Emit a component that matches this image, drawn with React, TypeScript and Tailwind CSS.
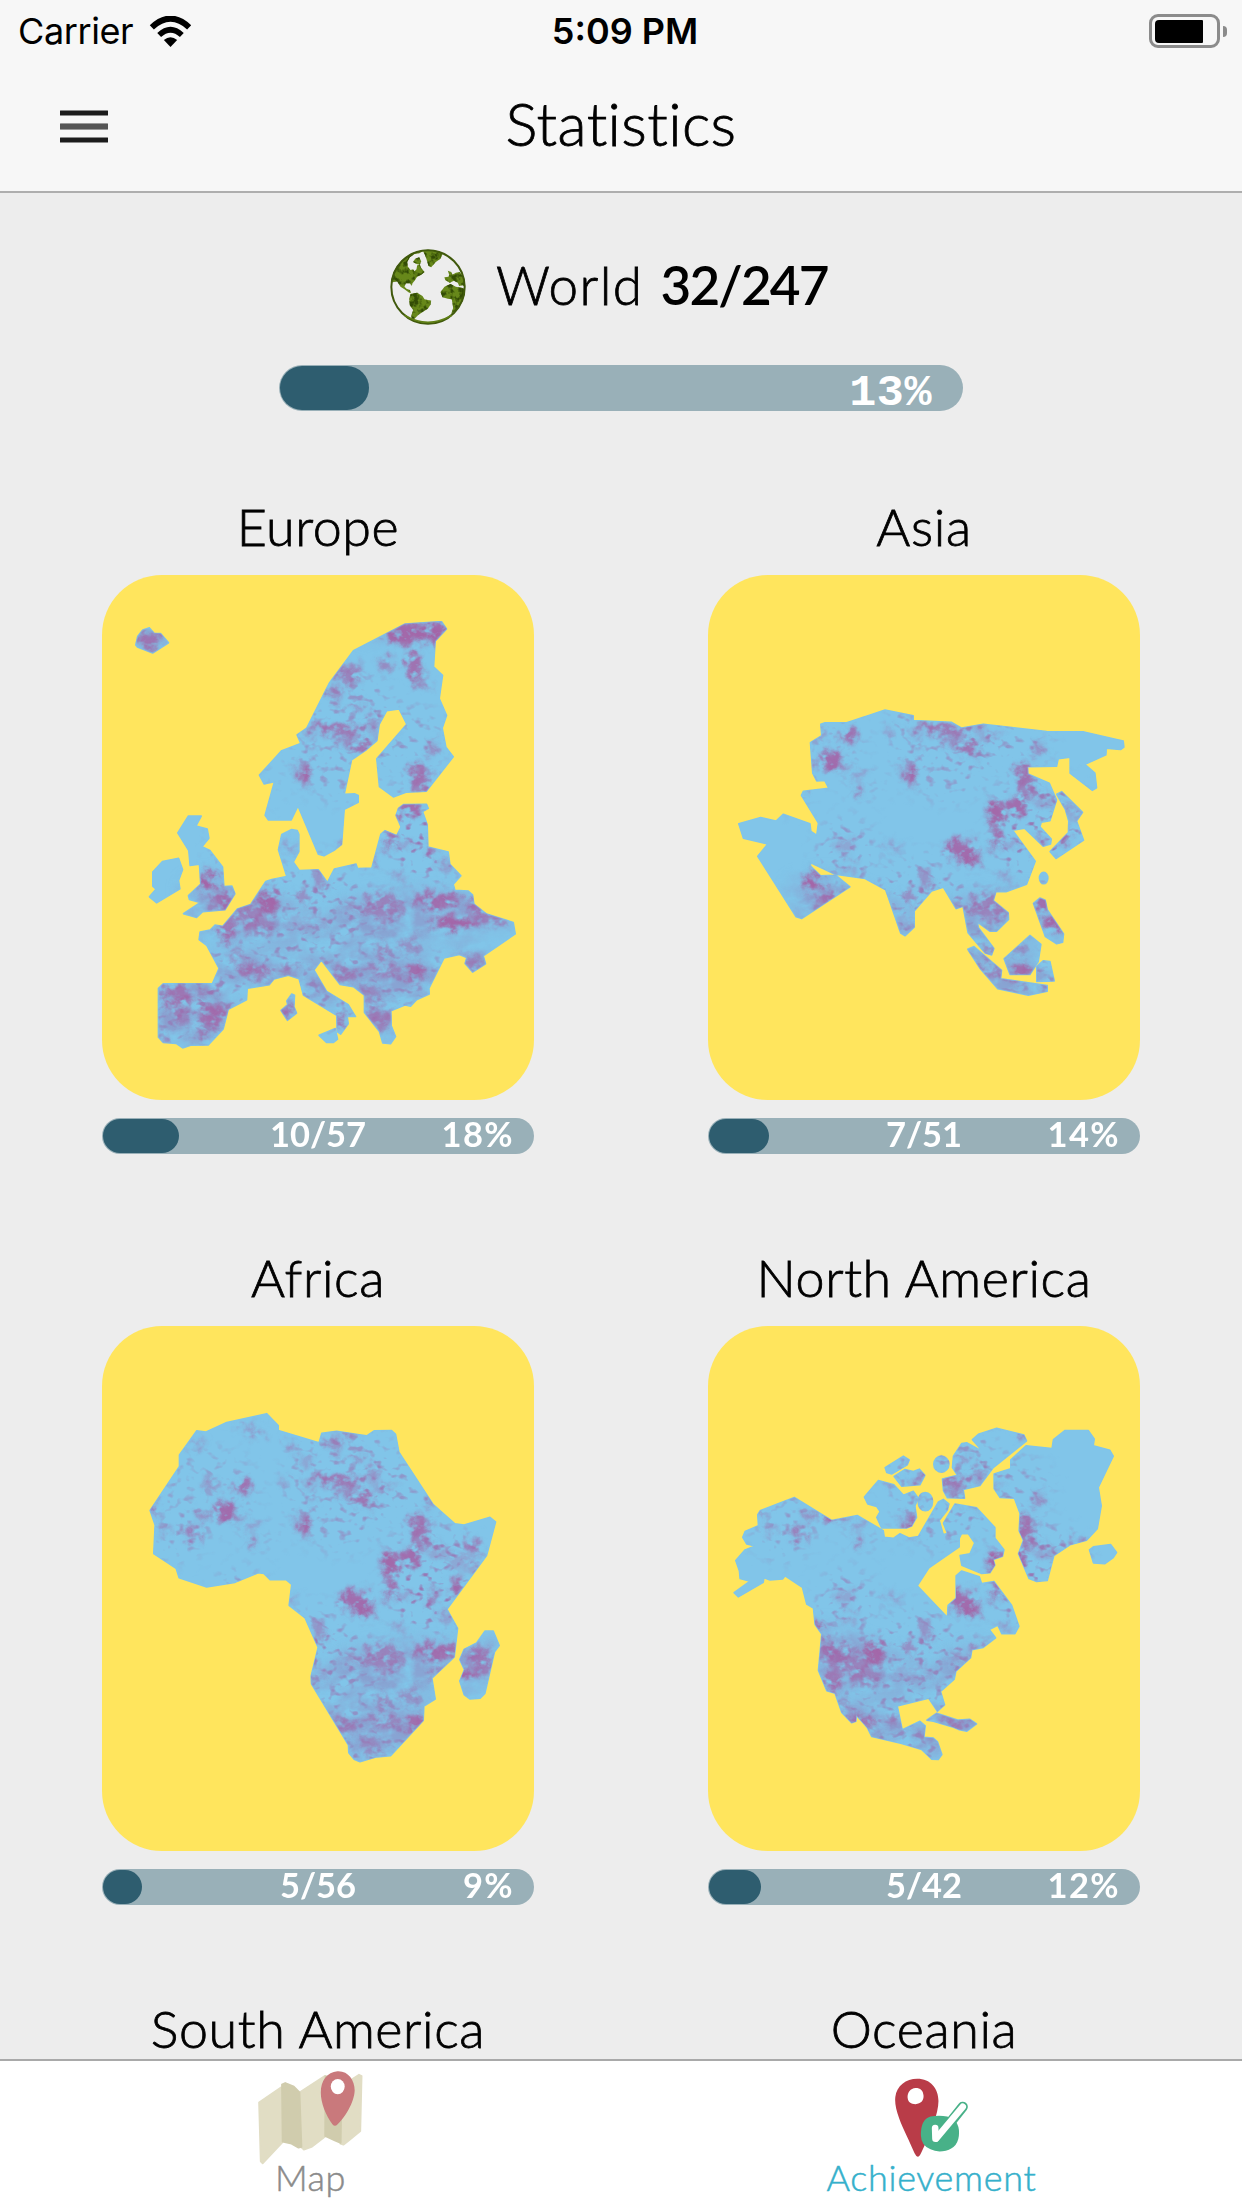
import { useId } from "react";

/* ---------- texture shared by every continent ---------- */

type Blob = [x: number, y: number, rx: number, ry: number, opacity: number];

const BLOBS: Blob[] = [
  [930, 165, 90, 28, 0.95], [1012, 160, 30, 34, 0.95], [740, 270, 50, 22, 0.7], [860, 245, 26, 20, 0.6],
  [940, 250, 24, 40, 0.85], [965, 292, 30, 14, 0.6], [700, 320, 20, 20, 0.4], [770, 351, 28, 7, 0.7],
  [700, 415, 95, 10, 1], [745, 446, 42, 14, 0.6], [790, 465, 34, 18, 0.85], [820, 398, 20, 20, 0.5],
  [850, 433, 40, 6, 0.6], [635, 456, 12, 12, 0.5], [615, 530, 17, 34, 0.95], [595, 515, 20, 8, 0.5],
  [570, 330, 15, 14, 0.5], [1000, 465, 20, 15, 0.6], [960, 528, 34, 24, 0.85], [956, 560, 22, 16, 0.8],
  [932, 612, 28, 26, 0.9], [962, 590, 24, 12, 0.7], [870, 635, 30, 32, 0.95], [875, 700, 18, 32, 0.85],
  [765, 730, 50, 30, 0.9], [800, 757, 32, 14, 1], [1000, 720, 22, 22, 0.6], [1068, 690, 24, 24, 0.75],
  [1120, 585, 26, 20, 0.75], [1090, 630, 50, 20, 0.3], [1030, 772, 30, 10, 0.5], [1020, 600, 40, 14, 0.35],
  [915, 715, 30, 10, 0.4], [900, 800, 20, 10, 0.4], [430, 431, 28, 15, 0.9], [374, 492, 26, 26, 0.9],
  [395, 510, 30, 12, 0.6], [330, 430, 30, 14, 0.45], [278, 558, 26, 14, 0.8], [305, 512, 16, 14, 0.6],
  [166, 492, 15, 20, 0.8], [455, 570, 10, 20, 0.7], [290, 322, 20, 12, 0.45], [465, 290, 34, 12, 0.6],
  [422, 262, 10, 8, 0.7], [620, 360, 22, 8, 0.5], [700, 320, 30, 12, 0.35], [465, 530, 20, 8, 0.4],
  [550, 420, 22, 10, 0.4], [195, 545, 25, 8, 0.4], [150, 180, 40, 26, 0.75], [322, 812, 30, 22, 1],
  [370, 855, 34, 18, 0.8], [508, 865, 30, 30, 0.95], [435, 895, 60, 32, 0.65], [378, 940, 32, 24, 0.85],
  [475, 930, 50, 20, 0.6], [410, 1010, 26, 12, 0.6], [456, 1045, 46, 18, 0.8], [415, 720, 26, 22, 0.3],
  [430, 770, 26, 14, 0.35], [660, 812, 24, 24, 0.5], [610, 855, 14, 22, 0.6], [560, 722, 22, 10, 0.5],
  [380, 870, 60, 26, 0.5], [1010, 860, 72, 20, 0.9], [1070, 920, 75, 18, 1], [1180, 912, 44, 12, 0.8],
  [850, 880, 62, 36, 0.65], [850, 1000, 20, 24, 0.6], [930, 980, 34, 20, 0.5], [850, 1050, 64, 14, 0.65],
  [945, 1050, 30, 28, 0.85], [730, 1060, 44, 20, 0.7], [810, 1110, 24, 30, 0.5], [840, 1170, 44, 26, 0.65],
  [1120, 1028, 30, 20, 0.6], [1140, 875, 34, 28, 0.8], [1100, 1010, 30, 10, 0.4], [230, 1120, 46, 38, 0.75],
  [340, 1165, 42, 28, 0.85], [250, 1170, 30, 20, 0.5], [312, 1212, 22, 20, 0.7], [190, 1226, 20, 10, 0.6],
  [308, 1105, 22, 14, 0.6], [565, 1158, 26, 20, 0.95], [728, 1180, 20, 20, 0.75], [575, 1040, 30, 16, 0.4],
  [745, 880, 24, 18, 0.35], [620, 920, 60, 24, 0.25],
];

const HAZE: Blob[] = [
  [430, 900, 160, 60, 0.55], [950, 900, 240, 60, 0.5], [1180, 885, 80, 40, 0.6], [600, 1080, 130, 60, 0.55],
  [850, 1080, 200, 90, 0.5], [700, 950, 200, 60, 0.3], [270, 1150, 130, 90, 0.6], [350, 840, 110, 40, 0.5],
  [900, 150, 140, 30, 0.45], [150, 185, 60, 40, 0.6], [1120, 1020, 60, 40, 0.6], [565, 1150, 50, 40, 0.6],
  [450, 1040, 130, 40, 0.55], [840, 1190, 60, 50, 0.4],
];

const FLECKS: Blob[] = [
  [640, 890, 260, 80, 0.7], [900, 440, 140, 90, 0.5], [720, 420, 170, 180, 0.55], [1000, 660, 150, 130, 0.8],
  [420, 740, 90, 90, 0.6], [320, 440, 160, 110, 0.4], [230, 560, 90, 60, 0.5], [620, 1080, 500, 120, 0.6],
  [980, 730, 120, 90, 0.6], [640, 800, 110, 60, 0.5], [260, 1150, 130, 110, 0.6], [480, 560, 80, 40, 0.3],
];

function Ellipses({ items }: { items: Blob[] }) {
  return (
    <>
      {items.map(([cx, cy, rx, ry, o], i) => (
        <ellipse key={i} cx={cx} cy={cy} rx={rx} ry={ry} opacity={o} />
      ))}
    </>
  );
}

interface Shape {
  viewBox: string;
  dx: number;
  dy: number;
  polygons: string[];
  ellipses?: [number, number, number, number][];
}

function Continent({ shape }: { shape: Shape }) {
  const id = useId().replace(/[^a-zA-Z0-9]/g, "");
  return (
    <svg viewBox={shape.viewBox} preserveAspectRatio="none" className="block h-full w-full">
      <defs>
        <filter id={`patch${id}`} filterUnits="userSpaceOnUse" x="0" y="0" width="1310" height="1400" colorInterpolationFilters="sRGB">
          <feGaussianBlur in="SourceGraphic" stdDeviation="8" result="soft" />
          <feTurbulence type="fractalNoise" baseFrequency="0.03" numOctaves="3" seed="7" result="warp" />
          <feDisplacementMap in="soft" in2="warp" scale="50" xChannelSelector="R" yChannelSelector="G" result="bent" />
          <feTurbulence type="fractalNoise" baseFrequency="0.03 0.045" numOctaves="3" seed="21" />
          <feColorMatrix values="0 0 0 0 0  0 0 0 0 0  0 0 0 0 0  4 0 0 0 -1.05" result="grain" />
          <feComposite in="bent" in2="grain" operator="in" />
          <feGaussianBlur stdDeviation="2" />
        </filter>
        <filter id={`haze${id}`} filterUnits="userSpaceOnUse" x="0" y="0" width="1310" height="1400" colorInterpolationFilters="sRGB">
          <feGaussianBlur in="SourceGraphic" stdDeviation="22" result="soft" />
          <feTurbulence type="fractalNoise" baseFrequency="0.016 0.026" numOctaves="4" seed="4" />
          <feColorMatrix values="0 0 0 0 0  0 0 0 0 0  0 0 0 0 0  2.6 0 0 0 -0.8" result="grain" />
          <feComposite in="soft" in2="grain" operator="in" />
        </filter>
        <filter id={`speck${id}`} filterUnits="userSpaceOnUse" x="0" y="0" width="1310" height="1400" colorInterpolationFilters="sRGB">
          <feGaussianBlur in="SourceGraphic" stdDeviation="24" result="soft" />
          <feTurbulence type="fractalNoise" baseFrequency="0.035 0.055" numOctaves="2" seed="12" />
          <feColorMatrix values="0 0 0 0 0  0 0 0 0 0  0 0 0 0 0  0 5 0 0 -2.8" result="grain" />
          <feComposite in="soft" in2="grain" operator="in" />
        </filter>
        <clipPath id={`land${id}`}>
          {shape.polygons.map((p, i) => (
            <polygon key={i} points={p} />
          ))}
          {shape.ellipses?.map(([cx, cy, rx, ry], i) => (
            <ellipse key={i} cx={cx} cy={cy} rx={rx} ry={ry} />
          ))}
        </clipPath>
      </defs>
      <g fill="#81c5e9" stroke="#81c5e9" strokeWidth="4" strokeLinejoin="round">
        {shape.polygons.map((p, i) => (
          <polygon key={i} points={p} />
        ))}
      </g>
      <g clipPath={`url(#land${id})`}>
        <rect width="1340" height="1400" fill="#81c5e9" />
        <g transform={`translate(${shape.dx} ${shape.dy})`}>
          <g fill="#8f84bd" filter={`url(#haze${id})`}>
            <Ellipses items={HAZE} />
          </g>
          <g fill="#9a72b0" filter={`url(#speck${id})`}>
            <Ellipses items={FLECKS} />
          </g>
          <g fill="#a464a7" filter={`url(#patch${id})`}>
            <Ellipses items={BLOBS} />
          </g>
        </g>
      </g>
    </svg>
  );
}

const EUROPE: Shape = {
  viewBox: "6 12 1296 1372",
  dx: 0,
  dy: 0,
  polygons: [
    "107,195 113,172 128,156 148,150 162,164 182,165 206,189 158,216 112,200",
    "1015,134 1025,134 1040,153 1006,184 1001,252 1028,274 1018,335 1040,379 1027,412 1038,462 1060,487 979,577 918,580 880,592 838,565 830,492 920,402 897,362 860,367 838,402 831,445 800,468 755,495 733,585 765,584 775,588 775,606 733,624 725,716 705,730 672,746 655,742 594,616 574,652 505,652 495,640 523,552 492,558 478,535 545,471 602,452 591,430 620,412 688,294 760,210 915,140",
    "265,642 304,642 288,668 322,676 327,700 306,722 330,732 368,775 372,826 396,825 405,845 375,887 308,892 290,907 250,897 300,868 268,860 265,850 302,820 298,768 270,771 266,732 233,686",
    "187,761 236,752 248,782 236,810 240,832 170,869 148,853 168,833 158,825 158,788",
    "560,800 535,730 545,690 575,677 592,680 597,690 597,735 580,762 598,784 655,782 682,815 703,780 768,767 773,779 815,778 842,690 855,680 890,693 903,670 888,640 895,622 910,612 980,611 985,622 968,630 982,665 984,723 1045,736 1050,768 1083,798 1060,820 1065,836 1105,838 1118,848 1122,872 1160,898 1240,920 1246,950 1150,1007 1157,1028 1118,1050 1095,1027 1100,1012 1078,1004 1032,1013 987,1092 988,1107 950,1122 932,1139 915,1136 873,1151 874,1190 887,1218 872,1237 848,1235 838,1205 793,1155 793,1110 760,1088 720,1082 664,1019 642,1044 680,1100 745,1135 767,1166 742,1165 745,1185 722,1212 711,1205 710,1163 610,1110 597,1067 565,1058 522,1068 508,1083 442,1092 440,1122 385,1147 370,1198 325,1240 272,1241 248,1248 228,1236 190,1234 175,1220 175,1092 190,1080 337,1080 357,1040 320,980 297,965 300,945 330,940 345,927 368,930 412,885 452,873 497,813 515,808",
    "560,1125 575,1107 584,1110 582,1140 590,1157 562,1176 543,1150 563,1135",
    "657,1215 706,1197 713,1225 700,1234 680,1234",
  ],
};

const ASIA: Shape = {
  viewBox: "24 12 1296 1372",
  dx: 18,
  dy: 0,
  polygons: [
    "362,402 375,398 440,398 555,365 640,380 640,392 755,397 785,412 850,402 1040,421 1152,422 1270,446 1272,462 1262,468 1219,465 1218,482 1155,507 1185,530 1190,568 1177,575 1110,530 1110,488 1075,492 1070,512 983,513 984,532 1048,556 1070,600 1050,654 1024,658 1020,670 1054,702 1052,715 1030,721 974,674 938,679 1006,760 980,820 918,840 888,840 880,863 925,895 926,912 890,943 870,943 833,920 835,933 882,988 875,1005 855,1000 804,947 789,878 768,884 730,828 695,838 643,890 643,932 615,955 602,948 557,835 495,805 405,794 332,764 332,773 362,798 408,797 450,827 305,910 288,905 173,747 203,715 130,700 116,662 182,646 228,655 250,637 330,662 333,682 350,692 355,660 304,588 310,577 386,569 374,549 350,550 338,530 331,450 365,432",
    "1070,585 1085,578 1148,632 1130,655 1151,705 1068,753 1050,735 1105,685 1106,655 1096,625",
    "1000,870 1020,856 1036,862 1042,887 1091,950 1088,972 1070,976 1036,957",
    "912,1015 990,954 1023,977 1015,1022 990,1056 930,1056",
    "1010,1035 1030,1020 1050,1022 1063,1073 1010,1074",
    "803,990 822,983 905,1045 902,1067 1042,1085 1042,1100 985,1110 893,1093 840,1040",
  ],
  ellipses: [[1031, 804, 15, 17]],
};

const AFRICA: Shape = {
  viewBox: "6 15 1296 1372",
  dx: 0,
  dy: 3,
  polygons: [
    "150,497 238,382 238,352 290,289 318,292 380,267 500,244 535,275 535,288 657,320 665,295 710,290 800,302 822,289 875,288 887,298 897,345 1000,482 1065,532 1092,535 1170,515 1187,527 1160,615 1041,755 1073,805 1063,880 996,935 1006,990 972,1008 970,1046 872,1138 830,1141 780,1154 762,1147 746,1130 745,1110 634,950 633,930 654,855 615,778 567,745 575,690 558,678 510,678 492,662 475,660 405,685 320,697 237,673 228,648 161,610 165,535",
    "1130,843 1155,812 1180,812 1198,850 1184,866 1155,975 1140,988 1110,990 1092,978 1079,943 1093,913 1079,887 1092,860",
  ],
};

const NORTH_AMERICA: Shape = {
  viewBox: "24 15 1296 1372",
  dx: 18,
  dy: 3,
  polygons: [
    "283,463 395,523 472,510 550,550 553,567 580,570 600,558 627,569 655,565 715,475 730,468 747,480 743,495 718,523 730,560 742,557 730,530 765,480 830,490 885,542 885,570 912,600 908,617 880,625 885,640 870,660 845,662 785,640 780,615 810,610 824,582 805,558 785,557 778,570 778,592 687,647 652,694 742,776 744,745 768,727 768,668 785,655 838,670 845,688 882,683 935,745 957,800 945,819 905,819 893,797 868,808 887,830 850,855 816,861 812,882 768,917 763,938 722,970 734,1005 712,1022 686,988 592,1008 607,1070 660,1048 676,1060 672,1090 700,1092 713,1102 726,1135 715,1148 695,1147 665,1122 605,1106 515,1088 502,1065 469,1032 468,1048 455,1052 425,1025 405,975 380,968 355,915 365,820 345,795 340,752 320,742 307,698 255,668 248,676 210,679 192,673 190,685 115,723 102,712 150,682 120,675 118,655 107,628 135,600 165,590 140,585 128,567 135,552 175,537 173,508 180,498",
    "680,1045 710,1027 775,1045 810,1043 830,1055 800,1074 778,1070 755,1062 700,1048",
    "932,365 978,328 1056,335 1060,312 1095,288 1165,288 1183,310 1180,328 1230,340 1240,355 1195,437 1204,485 1192,545 1160,575 1110,587 1062,615 1042,680 1010,683 987,675 955,610 970,575 957,550 960,505 943,465 900,463 882,440 882,402 932,388",
    "817,312 835,298 890,282 972,300 980,315 880,385 840,432 790,442 794,465 742,464 730,445 727,415 772,405 757,385 760,355 785,322 800,320 848,343",
    "555,385 610,355 628,365 622,378 575,402 560,398",
    "582,408 615,390 640,395 658,389 675,405 660,430 605,434",
    "493,462 535,419 582,430 610,457 640,447 655,465 645,485 650,515 635,538 620,543 545,543 530,515 540,500 530,487 503,480",
    "1168,600 1180,592 1232,586 1250,607 1240,620 1215,636 1180,634",
  ],
  ellipses: [
    [724, 376, 25, 23],
    [676, 474, 24, 26],
  ],
};

/* ---------- icons ---------- */

function WifiIcon() {
  return (
    <svg viewBox="449 43 128 93" className="h-[31px] w-[43px]" fill="none">
      <path d="M457 77 Q513 25 569 77" stroke="#000" strokeWidth="18" />
      <path d="M479 100 Q513 69 547 100" stroke="#000" strokeWidth="17" />
      <path d="M493 115 Q513 98 533 115 L513 136 Z" fill="#000" />
    </svg>
  );
}

function BatteryIcon() {
  return (
    <div className="flex items-center gap-[3px]">
      <div className="h-[34px] w-[71px] rounded-[9px] border-[3px] border-[#8b8b8b] p-[2.5px]">
        <div className="h-full w-[48px] rounded-l-[4px] rounded-r-[1px] bg-black" />
      </div>
      <div className="h-[11px] w-[4px] rounded-r-full bg-[#8b8b8b]" />
    </div>
  );
}

function GlobeIcon() {
  const id = useId().replace(/[^a-zA-Z0-9]/g, "");
  return (
    <svg viewBox="31 27 227 228" className="h-[76px] w-[76px]">
      <defs>
        <clipPath id={`disc${id}`}>
          <circle cx="144.5" cy="141" r="112" />
        </clipPath>
        <filter id={`moss${id}`} x="0" y="0" width="1" height="1" colorInterpolationFilters="sRGB">
          <feTurbulence type="fractalNoise" baseFrequency="0.05" numOctaves="3" seed="3" />
          <feColorMatrix values="0 0 0 0 0.2  0 0 0 0 0.3  0 0 0 0 0.02  5 0 0 0 -2.2" result="n" />
          <feComposite in="n" in2="SourceGraphic" operator="in" result="d" />
          <feMerge>
            <feMergeNode in="SourceGraphic" />
            <feMergeNode in="d" />
          </feMerge>
        </filter>
      </defs>
      <g clipPath={`url(#disc${id})`}>
        <g fill="#67881a" filter={`url(#moss${id})`}>
          <path d="M28 130 L40 90 L65 55 L95 36 L128 28 L132 32 L118 40 L104 42 L90 52 L82 66 L84 80 L92 90 L100 88 L104 94 L110 88 L112 76 L120 74 L124 84 L134 96 L124 104 L112 110 L104 122 L98 130 L96 137 L90 130 L78 130 L74 140 L80 146 L90 150 L94 158 L88 158 L74 148 L62 140 L52 124 L42 126 Z" />
          <path d="M106 56 L118 52 L124 64 L120 74 L110 72 L100 66 Z" />
          <path d="M128 30 L170 24 L188 42 L182 56 L168 66 L154 82 L146 78 L142 64 L136 46 Z" />
          <path d="M92 162 L112 158 L128 168 L134 178 L154 182 L152 194 L144 206 L128 216 L116 224 L104 236 L96 240 L94 228 L100 210 L90 196 L88 176 Z" />
          <path d="M196 120 L194 112 L206 110 L208 104 L204 92 L214 96 L218 104 L228 98 L240 96 L254 116 L258 140 L248 136 L238 138 L234 128 L222 122 L210 128 Z" />
          <path d="M194 140 L212 132 L228 140 L248 144 L258 150 L252 182 L234 206 L214 222 L220 204 L216 178 L204 176 L188 172 L182 156 Z" />
        </g>
      </g>
      <circle cx="144.5" cy="141" r="110" fill="none" stroke="#40590c" strokeWidth="6" />
      <path d="M74 226 Q144 268 216 226" fill="none" stroke="#5f7f14" strokeWidth="5" />
    </svg>
  );
}

function MapIcon() {
  return (
    <svg viewBox="52 30 320 286" className="h-[95px] w-[107px]">
      <g strokeLinejoin="round" strokeWidth="5">
        <path d="M57 128 L124 82 L128 247 L68 311 L62 305 Z" fill="#e1ddc4" stroke="#e1ddc4" />
        <path d="M180 97 L255 48 L257 230 L215 262 L192 270 L184 262 Z" fill="#e1ddc4" stroke="#e1ddc4" />
        <path d="M306 78 L358 44 L366 48 L362 214 L330 240 L311 255 L302 252 Z" fill="#e1ddc4" stroke="#e1ddc4" />
        <path d="M126 74 L136 69 L162 80 L179 97 L185 262 L176 264 L155 252 L128 246 Z" fill="#d0ccad" stroke="#d0ccad" />
        <path d="M257 48 L306 60 L303 250 L285 242 L256 229 Z" fill="#d0ccad" stroke="#d0ccad" />
      </g>
      <path
        fill="#c9797c"
        d="M293 34 C325 32 345 60 345 92 C344 128 314 176 293 194 Q285 202 278 193 C258 168 243 128 243 98 C243 62 262 37 293 34 Z"
      />
      <ellipse cx="294" cy="80" rx="21" ry="23" fill="#fff" />
    </svg>
  );
}

function AchievementIcon() {
  return (
    <svg viewBox="100 50 230 244" className="h-[81px] w-[77px]">
      <path
        fillRule="evenodd"
        fill="#b93c48"
        d="M172 55 C212 55 236 84 236 122 C236 160 212 220 184 278 Q174 301 164 280 C150 246 128 204 118 176 C108 148 104 128 106 110 C110 76 138 55 172 55 Z M167 83 C150 84 142 98 143 112 C144 126 153 132 167 132 C184 131 192 120 191 106 C190 91 182 83 167 83 Z"
      />
      <path
        fill="#48b188"
        d="M212 169 Q238 164 262 169 Q298 178 298 218 Q298 262 258 272 Q232 278 212 268 Q184 256 183 226 Q182 178 212 169 Z"
      />
      <path d="M236 232 L309 140" stroke="#48b188" strokeWidth="31" strokeLinecap="round" />
      <path d="M230 234 L309 140" stroke="#fff" strokeWidth="20" strokeLinecap="round" />
      <path d="M226 204 L227 236" stroke="#fff" strokeWidth="20" strokeLinecap="round" />
    </svg>
  );
}

/* ---------- layout ---------- */

interface Region {
  name: string;
  visited?: string;
  percent?: string;
  fill?: number;
  shape?: Shape;
}

const REGIONS: Region[] = [
  { name: "Europe", visited: "10/57", percent: "18%", fill: 76, shape: EUROPE },
  { name: "Asia", visited: "7/51", percent: "14%", fill: 60, shape: ASIA },
  { name: "Africa", visited: "5/56", percent: "9%", fill: 39, shape: AFRICA },
  { name: "North America", visited: "5/42", percent: "12%", fill: 52, shape: NORTH_AMERICA },
  { name: "South America" },
  { name: "Oceania" },
];

function RegionCard({ region }: { region: Region }) {
  return (
    <section className="flex h-[751px] w-[432px] flex-col">
      <h2 className="flex h-[82px] items-start justify-center pt-[1px] text-[52px] leading-[64px] font-light tracking-[0.6px] whitespace-nowrap [-webkit-text-stroke:0.8px_#000]">
        {region.name}
      </h2>
      {region.shape && (
        <>
          <div className="h-[525px] w-full overflow-hidden rounded-[60px] bg-[#ffe55d]">
            <Continent shape={region.shape} />
          </div>
          <div className="mt-[18px] grid h-[36px] grid-cols-1 grid-rows-1 rounded-full bg-[#99b0b8]">
            <div
              className="col-start-1 row-start-1 my-[1px] ml-[1px] rounded-full bg-[#2e5d6f]"
              style={{ width: region.fill }}
            />
            <div className="col-start-1 row-start-1 -mt-[5px] grid h-[42px] grid-cols-3 items-center pr-[20px] pl-[20px] text-[34.5px] leading-[42px] font-bold tracking-[0.7px] text-white">
              <span />
              <span className="text-center tracking-[0px]">{region.visited}</span>
              <span className="text-right tracking-[1.4px]">{region.percent}</span>
            </div>
          </div>
        </>
      )}
    </section>
  );
}

export default function App() {
  return (
    <div className="flex h-[2208px] w-[1242px] flex-col overflow-hidden bg-[#ededed] font-['Lato',sans-serif] text-black">
      <header className="flex h-[193px] shrink-0 flex-col border-b-2 border-[#aeaeae] bg-[#f7f7f7]">
        <div className="grid h-[62px] grid-cols-3 items-center pr-[15px] pl-[18px] font-['Inter',sans-serif]">
          <div className="flex items-center gap-[16px]">
            <span className="text-[36px] leading-[60px] tracking-[-0.4px]">Carrier</span>
            <WifiIcon />
          </div>
          <div className="pl-[5px] text-center text-[36px] leading-[60px] font-semibold">5:09 PM</div>
          <div className="flex justify-end">
            <BatteryIcon />
          </div>
        </div>
        <div className="grid h-[129px] grid-cols-3 items-center">
          <div className="flex flex-col gap-[7px] pl-[60px]">
            <span className="h-[6px] w-[48px] rounded-[1px] border-y border-[#8a8a8a] bg-[#1c1c1c]" />
            <span className="h-[7px] w-[48px] rounded-[1px] border-y border-[#9a9a9a] bg-[#555]" />
            <span className="h-[6px] w-[48px] rounded-[1px] border-y border-[#8a8a8a] bg-[#1c1c1c]" />
          </div>
          <h1 className="pb-[8px] text-center text-[60px] leading-[72px] font-light tracking-[0.4px] [-webkit-text-stroke:0.8px_#000]">
            Statistics
          </h1>
        </div>
      </header>

      <main className="flex min-h-0 flex-1 flex-col items-center overflow-hidden">
        <div className="mt-[56px] flex h-[76px] w-full shrink-0 items-center gap-[30px] pl-[390px]">
          <GlobeIcon />
          <p className="flex items-baseline gap-[17px] pb-[4px] text-[53px] leading-[72px] whitespace-nowrap">
            <span className="font-light tracking-[1.4px] [-webkit-text-stroke:0.8px_#000]">World</span>
            <span className="font-semibold tracking-[-1.8px]">32/247</span>
          </p>
        </div>
        <div className="mt-[40px] grid h-[46px] w-[684px] shrink-0 grid-cols-1 grid-rows-1 rounded-full bg-[#99b0b8]">
          <div className="col-start-1 row-start-1 my-[1px] ml-[1px] w-[89px] rounded-full bg-[#2e5d6f]" />
          <div className="col-start-1 row-start-1 pt-[2px] pr-[31px] text-right font-['Liberation_Mono',monospace] text-[45px] leading-[54px] font-bold tracking-[0.6px] text-white">
            13%
          </div>
        </div>
        <div className="mt-[82px] grid w-full grid-cols-[432px_432px] justify-between gap-x-[174px] pr-[102px] pl-[102px]">
          {REGIONS.map((r) => (
            <RegionCard key={r.name} region={r} />
          ))}
        </div>
      </main>

      <nav className="grid h-[149px] shrink-0 grid-cols-2 border-t-2 border-[#a9a9a9] bg-white text-[36px] font-light">
        <div className="flex flex-col items-center pt-[9px] text-[#8b8b8b]">
          <MapIcon />
          <span className="-mt-[10px] leading-[44px] tracking-[0.6px] [-webkit-text-stroke:0.5px_#8b8b8b]">Map</span>
        </div>
        <div className="flex flex-col items-center pt-[16px] text-[#35b0cb]">
          <AchievementIcon />
          <span className="-mt-[3px] leading-[44px] tracking-[0.7px] [-webkit-text-stroke:0.5px_#35b0cb]">Achievement</span>
        </div>
      </nav>
    </div>
  );
}
